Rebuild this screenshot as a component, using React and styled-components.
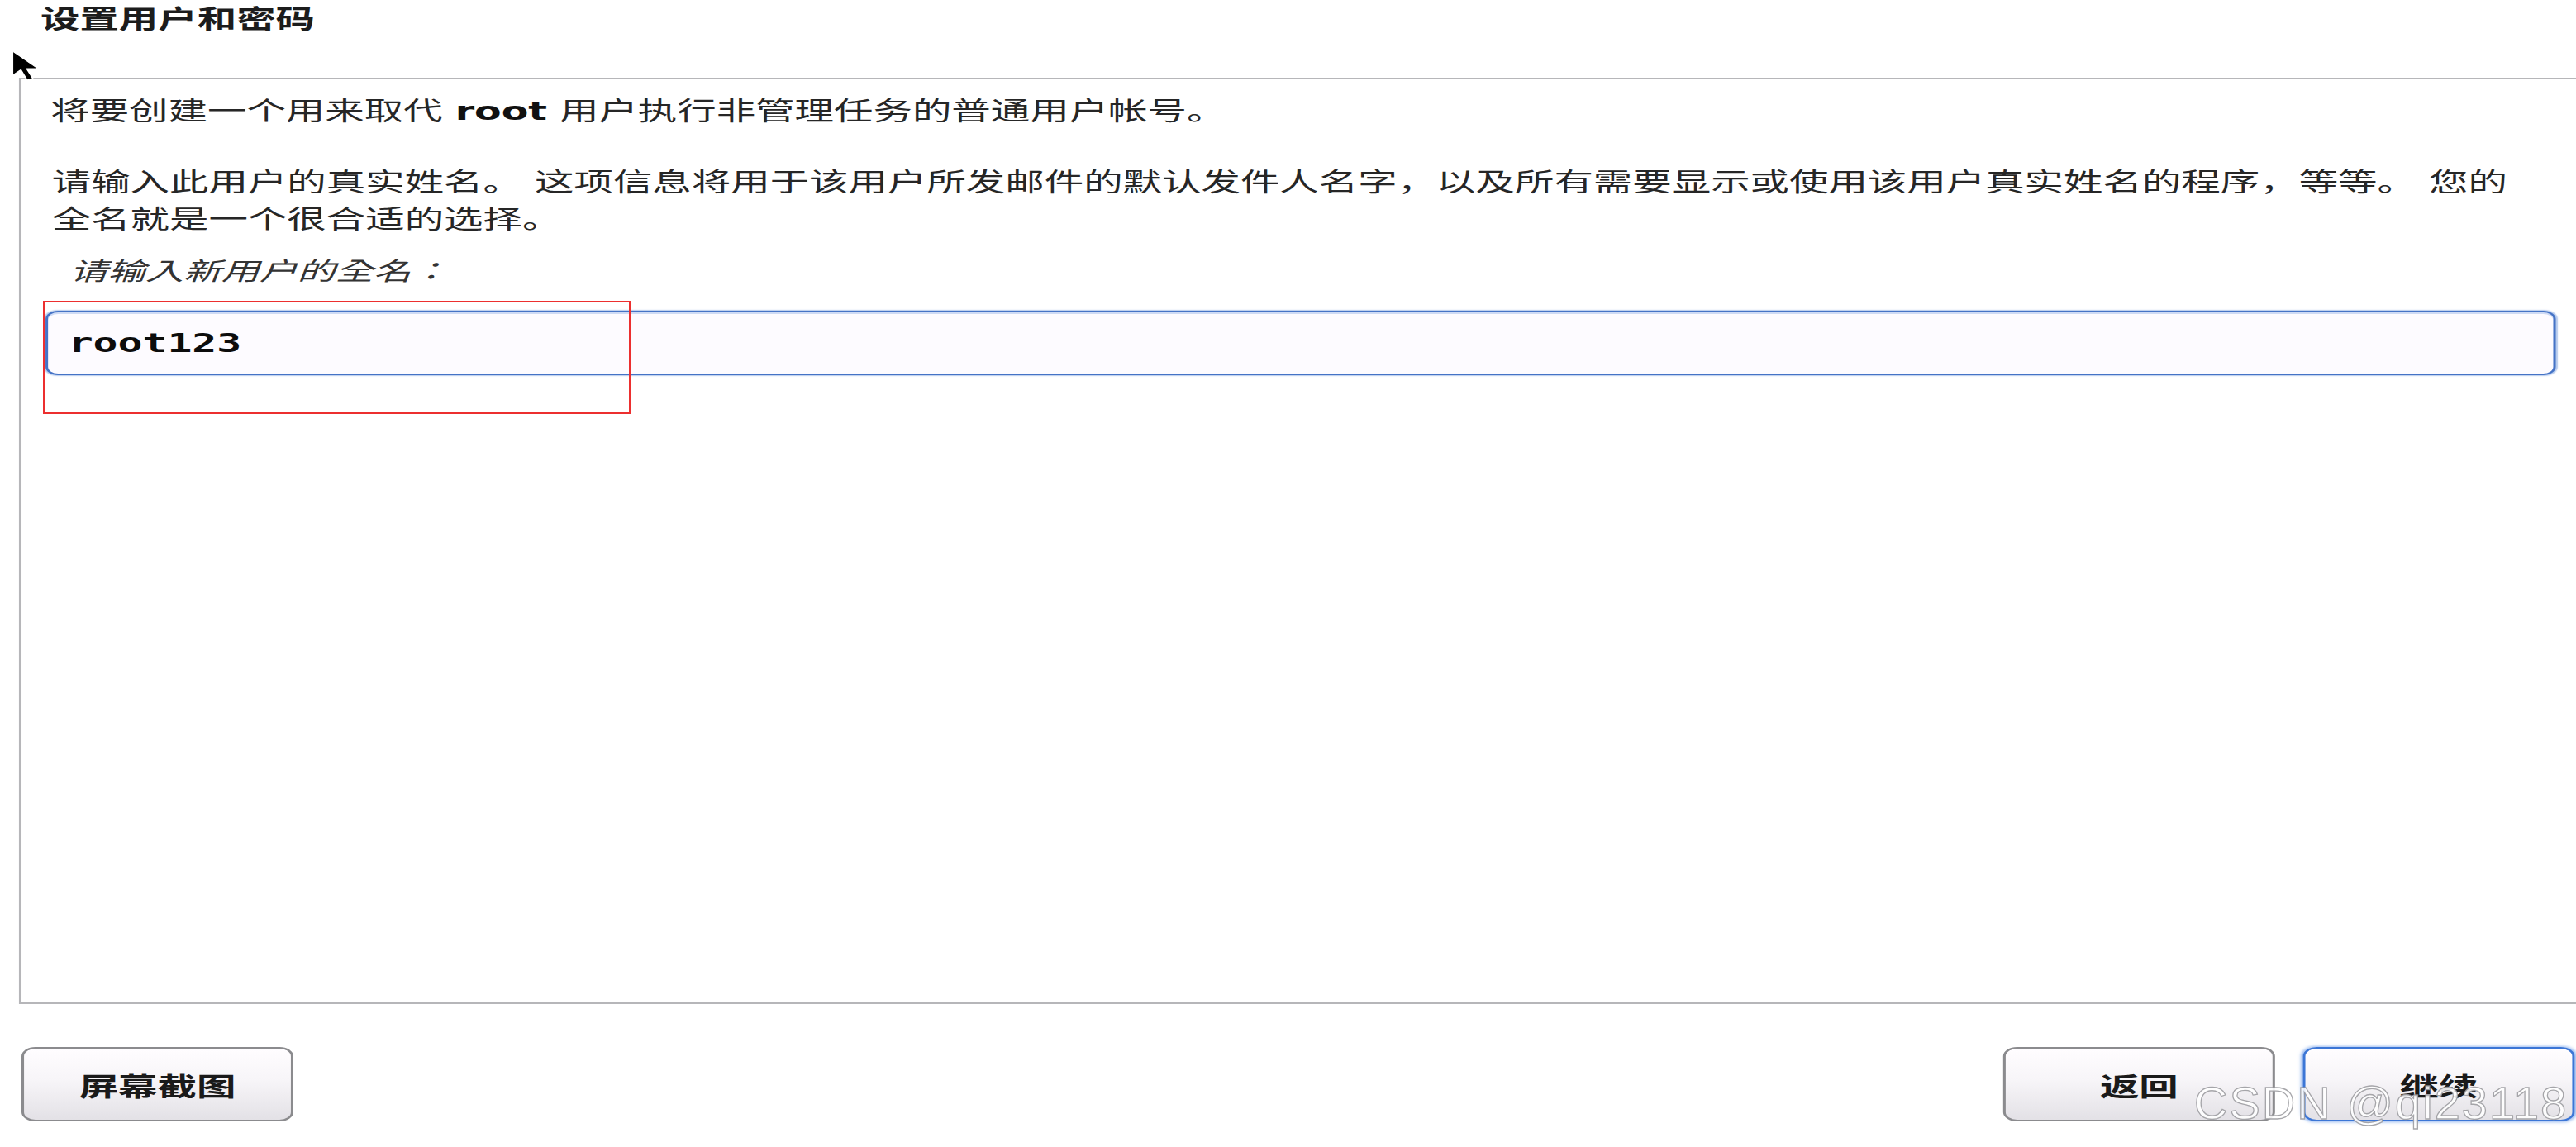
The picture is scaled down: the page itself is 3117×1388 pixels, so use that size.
import React from "react";
import styled, { createGlobalStyle } from "styled-components";

// the capture is a 4:3 installer screen shown stretched sideways
const STRETCH = 1.5302;
const PAGE_W = 3117;
const PAGE_H = 1388;

const GlobalStyle = createGlobalStyle`
    html, body {
        margin: 0;
        padding: 0;
        background: #ffffff;
        overflow: hidden;
    }
`;

const Page = styled.div`
    position: relative;
    width: ${PAGE_W}px;
    height: ${PAGE_H}px;
    overflow: hidden;
    background: #ffffff;
`;

const Stage = styled.div`
    position: relative;
    width: ${Math.round(PAGE_W / STRETCH)}px;
    height: ${PAGE_H}px;
    display: flex;
    flex-direction: column;
    transform: scaleX(${STRETCH});
    transform-origin: 0 0;
    font-family: "DejaVu Sans", "Noto Sans CJK SC", sans-serif;
    color: #242424;
`;

const Title = styled.h1`
    margin: 0;
    padding-left: 32px;
    height: 47px;
    line-height: 47px;
    font-size: 31px;
    font-weight: 700;
    color: #1c1c1c;
`;

const Panel = styled.div`
    box-sizing: border-box;
    margin: 47px -4px 0 15px;
    height: 1121px;
    padding: 16px 18px 0 19px;
    border: 2px solid #b6b6b9;
    display: flex;
    flex-direction: column;
`;

const Text = styled.p`
    margin: ${(props) => props.$gap || 0}px 0 0 0;
    padding-left: ${(props) => props.$indent || 4}px;
    font-size: 31px;
    line-height: 45px;
    white-space: nowrap;
    color: #262626;
`;

const Bold = styled.b`
    font-weight: 700;
    color: #111;
`;

const Label = styled.label`
    margin-top: 16px;
    padding-left: 19px;
    font-family: "Noto Sans CJK TC", "Noto Sans CJK SC", sans-serif;
    font-size: 30px;
    line-height: 45px;
    font-style: italic;
    color: #333333;
`;

const NameInput = styled.div`
    box-sizing: border-box;
    margin-top: 27px;
    height: 78px;
    padding-left: 16px;
    display: flex;
    align-items: center;
    border: 2px solid #4573c6;
    border-radius: 10px;
    background: #fdfbff;
    box-shadow: 0 0 1px 1px rgba(96, 140, 214, 0.45),
        inset 0 2px 0 rgba(120, 160, 225, 0.35);
    font-family: "DejaVu Sans Mono", monospace;
    font-weight: 700;
    font-size: 32.5px;
    color: #0c0c0c;
`;

const Footer = styled.div`
    margin-top: 52px;
    padding: 0 1px 0 17px;
    display: flex;
    justify-content: space-between;
`;

const ButtonGroup = styled.div`
    display: flex;
    gap: 22px;
`;

const Button = styled.button`
    box-sizing: border-box;
    width: 215px;
    height: 90px;
    border: 2px solid ${(props) => (props.$focused ? "#3c76d6" : "#8b8b8e")};
    border-radius: 11px;
    background: linear-gradient(
        to bottom,
        #fffdff 0%,
        #f7f5f8 45%,
        #e3e1e6 100%
    );
    box-shadow: ${(props) =>
        props.$focused ? "0 0 3px 1px rgba(85, 140, 230, 0.6)" : "none"};
    font-family: "Noto Sans CJK SC", sans-serif;
    font-size: 31px;
    font-weight: 700;
    color: #1a1a1a;
    padding: 0;
`;

const Cursor = styled.svg`
    position: absolute;
    left: 9px;
    top: 61px;
    width: 22px;
    height: 38px;
`;

const Annotation = styled.div`
    position: absolute;
    left: 52px;
    top: 364px;
    width: 711px;
    height: 137px;
    box-sizing: border-box;
    border: 2px solid #ec2f2f;
    pointer-events: none;
`;

const Watermark = styled.div`
    position: absolute;
    left: 2655px;
    top: 1307px;
    font-family: "Liberation Sans", Arial, sans-serif;
    font-size: 56px;
    line-height: 1;
    letter-spacing: 2px;
    white-space: nowrap;
    color: rgba(255, 255, 255, 0.88);
    -webkit-text-stroke: 1.3px rgba(150, 150, 155, 0.85);
    pointer-events: none;
`;

const App = () => {
    return (
        <Page>
            <GlobalStyle />
            <Stage>
                <Cursor viewBox="0 0 22 38">
                    <path
                        d="M1 1 V30 L7.5 23.5 L12.5 36 L17 34 L12 22 H21 Z"
                        fill="#000"
                        stroke="#fff"
                        strokeWidth="1"
                    />
                </Cursor>
                <Title>设置用户和密码</Title>
                <Panel>
                    <Text>
                        将要创建一个用来取代 <Bold>root</Bold>{" "}
                        用户执行非管理任务的普通用户帐号。
                    </Text>
                    <Text $gap={41} $indent={5}>
                        请输入此用户的真实姓名。
                        这项信息将用于该用户所发邮件的默认发件人名字，以及所有需要显示或使用该用户真实姓名的程序，等等。
                        您的
                        <br />
                        全名就是一个很合适的选择。
                    </Text>
                    <Label>请输入新用户的全名：</Label>
                    <NameInput>root123</NameInput>
                </Panel>
                <Footer>
                    <Button>屏幕截图</Button>
                    <ButtonGroup>
                        <Button>返回</Button>
                        <Button $focused>继续</Button>
                    </ButtonGroup>
                </Footer>
            </Stage>
            <Annotation />
            <Watermark>CSDN @qi23118</Watermark>
        </Page>
    );
};

export default App;
